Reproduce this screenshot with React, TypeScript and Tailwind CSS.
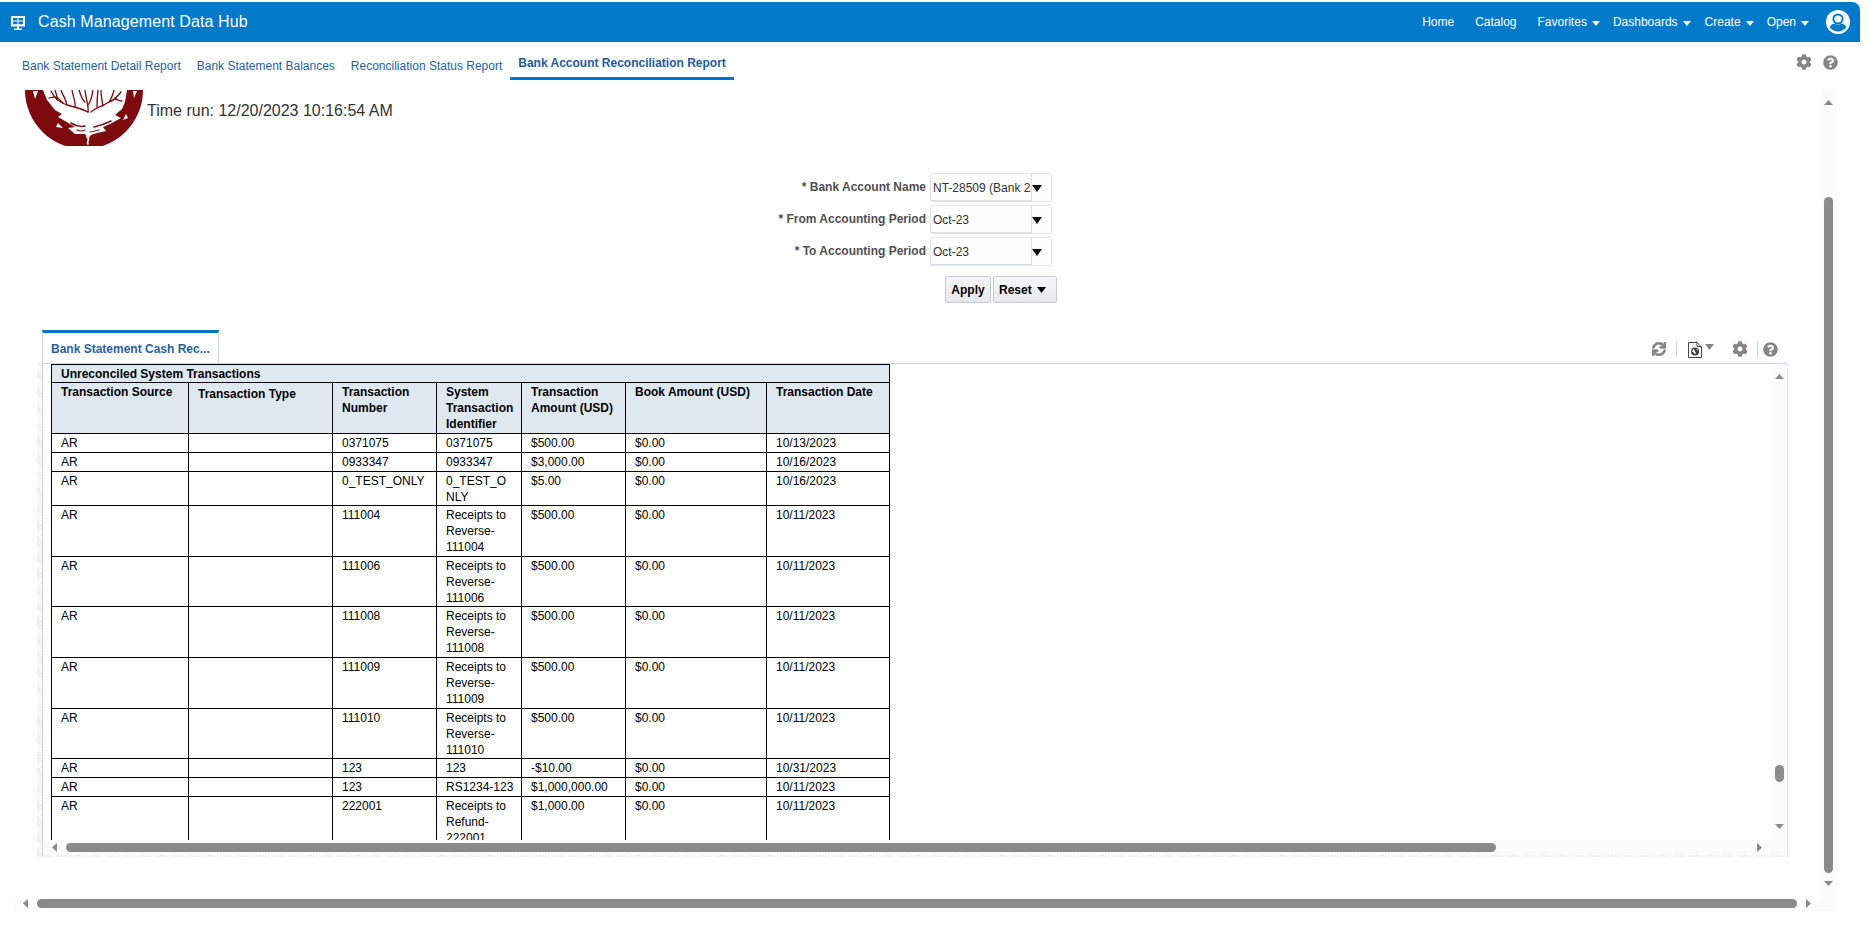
import React from 'react';
import { FaCog, FaQuestionCircle, FaSync } from 'react-icons/fa';

const tabs = ['Bank Statement Detail Report', 'Bank Statement Balances', 'Reconciliation Status Report'];

const columns = [
  { label: 'Transaction Source', width: 'w-[137px]' },
  { label: 'Transaction Type', width: 'w-[144px]' },
  { label: 'Transaction Number', width: 'w-[104px]' },
  { label: 'System Transaction Identifier', width: 'w-[85px]' },
  { label: 'Transaction Amount (USD)', width: 'w-[104px]' },
  { label: 'Book Amount (USD)', width: 'w-[141px]' },
  { label: 'Transaction Date', width: 'w-[123px]' },
];

const rows = [
  { h: 'h-[19px]', cells: ['AR', '', '0371075', '0371075', '$500.00', '$0.00', '10/13/2023'] },
  { h: 'h-[19px]', cells: ['AR', '', '0933347', '0933347', '$3,000.00', '$0.00', '10/16/2023'] },
  { h: 'h-[34px]', cells: ['AR', '', '0_TEST_ONLY', '0_TEST_ONLY', '$5.00', '$0.00', '10/16/2023'] },
  { h: 'h-[51px]', cells: ['AR', '', '111004', 'Receipts to Reverse-111004', '$500.00', '$0.00', '10/11/2023'] },
  { h: 'h-[50px]', cells: ['AR', '', '111006', 'Receipts to Reverse-111006', '$500.00', '$0.00', '10/11/2023'] },
  { h: 'h-[51px]', cells: ['AR', '', '111008', 'Receipts to Reverse-111008', '$500.00', '$0.00', '10/11/2023'] },
  { h: 'h-[51px]', cells: ['AR', '', '111009', 'Receipts to Reverse-111009', '$500.00', '$0.00', '10/11/2023'] },
  { h: 'h-[50px]', cells: ['AR', '', '111010', 'Receipts to Reverse-111010', '$500.00', '$0.00', '10/11/2023'] },
  { h: 'h-[19px]', cells: ['AR', '', '123', '123', '-$10.00', '$0.00', '10/31/2023'] },
  { h: 'h-[19px]', cells: ['AR', '', '123', 'RS1234-123', '$1,000,000.00', '$0.00', '10/11/2023'] },
  { h: 'h-[51px]', cells: ['AR', '', '222001', 'Receipts to Refund-222001', '$1,000.00', '$0.00', '10/11/2023'] },
];

const filters = [
  { label: '* Bank Account Name', value: 'NT-28509 (Bank 2' },
  { label: '* From Accounting Period', value: 'Oct-23' },
  { label: '* To Accounting Period', value: 'Oct-23' },
];

const navLinks = [
  { label: 'Home', ml: 'ml-0', menu: false },
  { label: 'Catalog', ml: 'ml-[21px]', menu: false },
  { label: 'Favorites', ml: 'ml-[21px]', menu: true },
  { label: 'Dashboards', ml: 'ml-[13px]', menu: true },
  { label: 'Create', ml: 'ml-[14px]', menu: true },
  { label: 'Open', ml: 'ml-[13px]', menu: true },
];

const Tri = ({ dir, className }: { dir: 'up' | 'down' | 'left' | 'right'; className: string }) => {
  const points = {
    up: '0,6 5,0 10,6',
    down: '0,0 10,0 5,6',
    left: '6,0 6,10 0,5',
    right: '0,0 6,5 0,10',
  }[dir];
  const box = dir === 'up' || dir === 'down' ? '0 0 10 6' : '0 0 6 10';
  return (
    <svg viewBox={box} className={className} fill="currentColor" preserveAspectRatio="none">
      <polygon points={points} />
    </svg>
  );
};

const MonitorIcon = () => (
  <svg viewBox="0 0 16 16" className="w-[16px] h-[16px] text-white" fill="currentColor">
    <path d="M1 1h14v10.5H1z" />
    <path fill="#027ac9" d="M3 3h4.5v2.6H3zM8.5 3H13v2.6H8.5zM3 6.6h4.5v2.6H3zM8.5 6.6H13v2.6H8.5z" />
    <path d="M7 11.5h2v2H7zM4 13.5h8V15H4z" />
  </svg>
);

const AvatarIcon = () => (
  <svg viewBox="0 0 24 24" className="w-[24px] h-[24px]">
    <circle cx="12" cy="12" r="12" fill="#fff" />
    <circle cx="12" cy="9" r="4.6" fill="none" stroke="#027ac9" strokeWidth="2" />
    <path d="M3.6 17c2-3.4 4.2-3.6 5.4-3 1.8 1 4.2 1 6 0 1.2-.6 3.400-.4 5.400 3-1.800 2.800-5 4.600-8.400 4.600S5.400 19.800 3.600 17z" fill="#027ac9" />
  </svg>
);

const ExportIcon = () => (
  <svg viewBox="0 0 14 17" className="w-[14px] h-[17px]">
    <path d="M.5 1.500h8.500l4.500 4.500v10.500H.5z" fill="#fff" stroke="#444" strokeWidth="1" />
    <path d="M9 .5v5h4.500" fill="none" stroke="#444" strokeWidth="1" />
    <circle cx="7" cy="10.500" r="4" fill="#3c3c3c" />
    <path d="M5 8.500c1.500-.5 2 .5 1.500 1.500l1.500 1.500-1 2-1-1.500L4 10.500zM8.500 7.800l1.500 1-1 1z" fill="#fff" />
  </svg>
);

const Logo = () => (
  <svg viewBox="0 0 118 56" className="w-[118px] h-[56px]">
    <path d="M0 0A59 59 0 0 0 118 0Z" fill="#7c0a0e" />
    <path d="M18 0H102L100 12 97 19 90 25 96 28 85 34 78 37 81 41 72 43 66 45 63 49 60 44 50 44 43 38 50 37 40 31 33 27 37 24 30 20 22 10Z" fill="#fff" />
    <g fill="none" stroke="#7c0a0e" strokeWidth="1.300" strokeLinecap="round">
      <path d="M63 22C58 19 50 17 42 15 36 13 30 10 26 1" />
      <path d="M42 15C41 9 38 6 36 0M50 17C51 12 48 7 47 0M32 10C33 7 31 4 30 0M38 13C34 10 34 5 24 8" />
      <path d="M63 22C64 16 61 10 60 0M60 12C57 10 56 6 54 0M63 15C66 12 67 6 68 0" />
      <path d="M66 22C70 18 78 16 84 12 87 8 88 4 89 0M78 16C77 11 76 6 76 0M84 12C88 11 92 7 96 2M72 18C72 14 72 8 73 0M90 8C92 10 94 11 97 11" />
    </g>
    <g fill="none" stroke="#7c0a0e" strokeLinecap="round">
      <path d="M46 33C52 37 56 37 60 36" strokeWidth="1.600" />
      <path d="M52 40C56 42 58 41 60 40" strokeWidth="1.200" />
      <path d="M86 31C78 35 74 36 69 37" strokeWidth="1.600" />
      <path d="M74 40C70 41 67 42 65 42" strokeWidth="1" />
    </g>
    <path d="M62 47C66 50 61 51 63 54" fill="none" stroke="#fff" strokeWidth="1.600" strokeLinecap="round" />
    <path d="M8 1l5 0-3 8zM108 1l4 0-3 7zM33 33l5 5-7-1zM101 24l-3 6 5-2z" fill="#fff" />
  </svg>
);

const FilterRow = ({ label, value }: { label: string; value: string }) => (
  <div className="flex items-center justify-end h-[29px] w-[1052px]">
    <span className="mr-[4px] mb-[2px] text-[12px] font-bold text-[#505050] whitespace-nowrap">{label}</span>
    <div className="flex w-[122px] h-[29px] border border-[#e2e6ea] rounded-[2px] bg-[#fdfdfe]">
      <div className="w-[101px] h-[27px] border-r border-b border-[#d9dfe5] pl-[2px] text-[12px] leading-[28px] text-[#333] overflow-hidden whitespace-nowrap">
        {value}
      </div>
      <Tri dir="down" className="w-[10px] h-[7px] mt-[11px]" />
    </div>
  </div>
);

const hatch = 'bg-[repeating-linear-gradient(45deg,#ececec_0,#ececec_1px,#fff_1px,#fff_2px)]';

export default function App() {
  return (
    <div className="w-[1868px] h-[926px] bg-white overflow-hidden font-['Liberation_Sans',Arial,sans-serif]">
      <header className="mt-[2px] w-[1860px] h-[40px] bg-[#027ac9] rounded-tr-[8px] flex items-center text-white">
        <div className="ml-[10px] mt-[2px]">
          <MonitorIcon />
        </div>
        <span className="ml-[12px] text-[16px] tracking-[0.1px] whitespace-nowrap">Cash Management Data Hub</span>
        <nav className="ml-auto flex items-center text-[12px] whitespace-nowrap">
          {navLinks.map((link) => (
            <div key={link.label} className={`flex items-center ${link.ml}`}>
              <span>{link.label}</span>
              {link.menu && <Tri dir="down" className="w-[8px] h-[5px] ml-[5px] mt-[2px] text-white" />}
            </div>
          ))}
        </nav>
        <div className="ml-[17px] mr-[10px]">
          <AvatarIcon />
        </div>
      </header>

      <div className="flex h-[48px] pl-[22px] text-[12px] text-[#2a5f9e] whitespace-nowrap">
        {tabs.map((t) => (
          <span key={t} className="mt-[16px] mr-[16px] leading-[16px] h-[16px]">{t}</span>
        ))}
        <div className="-ml-[8px] mt-[13px] h-[25px] px-[8px] border-b-[3px] border-[#0572ce] font-bold leading-[16px] text-[#245a9c]">
          Bank Account Reconciliation Report
        </div>
        <div className="ml-auto mr-[30px] mt-[12px] h-[16px] flex items-center text-[#858585]">
          <FaCog className="w-[16px] h-[16px]" />
          <FaQuestionCircle className="ml-[11px] w-[15px] h-[15px]" />
        </div>
      </div>

      <div className="flex h-[809px]">
        <main className="w-[1821px] h-[809px] overflow-hidden">
          <div className="flex h-[56px] pl-[25px]">
            <Logo />
            <span className="ml-[4px] mt-[12px] text-[16px] leading-[18px] text-[#333] whitespace-nowrap">
              Time run: 12/20/2023 10:16:54 AM
            </span>
          </div>

          <div className="mt-[27px] flex flex-col gap-[3px]">
            {filters.map((f) => (
              <FilterRow key={f.label} label={f.label} value={f.value} />
            ))}
          </div>
          <div className="mt-[10px] ml-[945px] flex gap-[2px] text-[12px] font-bold text-black">
            <button className="w-[46px] h-[27px] border border-[#c4ccd4] rounded-[2px] bg-gradient-to-b from-[#f5f6f7] to-[#e5e8eb]">
              Apply
            </button>
            <button className="w-[64px] h-[27px] pl-[5px] border border-[#c4ccd4] rounded-[2px] bg-gradient-to-b from-[#f5f6f7] to-[#e5e8eb] flex items-center">
              Reset
              <Tri dir="down" className="w-[9px] h-[6px] ml-[5px] text-black" />
            </button>
          </div>

          <div className="mt-[27px] ml-[42px] w-[1746px] flex items-center h-[34px]">
            <div className="w-[177px] h-[34px] border-t-[3px] border-x border-t-[#0572ce] border-x-[#c4d3e2] bg-white pl-[8px] text-[12px] font-bold leading-[32px] text-[#2a5f9e] whitespace-nowrap">
              Bank Statement Cash Rec...
            </div>
            <div className="ml-auto mr-[10px] mt-[4px] flex items-center text-[#858585]">
              <FaSync className="w-[14px] h-[14px]" stroke="currentColor" strokeWidth={30} />
              <div className="ml-[10px] w-px h-[16px] bg-[#c9d7e4]" />
              <div className="ml-[11px]">
                <ExportIcon />
              </div>
              <Tri dir="down" className="w-[9px] h-[6px] ml-[3px] mb-[4px] text-[#858585]" />
              <FaCog className="ml-[18px] w-[16px] h-[16px]" />
              <div className="ml-[9px] w-px h-[16px] bg-[#c9d7e4]" />
              <FaQuestionCircle className="ml-[5px] w-[15px] h-[15px]" />
            </div>
          </div>

          <div className="flex -mt-px ml-[37px] w-[1751px] h-[494px]">
            <div className={`w-[5px] h-full ${hatch}`} />
            <div className="w-[1745px] h-full border-l border-t border-[#c9d7e4] flex flex-col">
              <div className="flex h-[476px] shrink-0">
                <div className="w-[1728px] pl-[8px] overflow-hidden">
                  <table className="table-fixed border-collapse w-[838px] text-[12px] leading-[16px] text-black">
                    <colgroup>
                      {columns.map((c) => (
                        <col key={c.label} className={c.width} />
                      ))}
                    </colgroup>
                    <thead className="bg-[#dfe8f1] font-bold">
                      <tr className="h-[18px]">
                        <th colSpan={7} className="border border-black pl-[9px] pt-px text-left align-top font-bold">
                          Unreconciled System Transactions
                        </th>
                      </tr>
                      <tr className="h-[51px]">
                        {columns.map((c, i) => (
                          <th
                            key={c.label}
                            className={`border border-black pl-[9px] pr-[4px] text-left align-top font-bold ${i === 1 ? 'pt-[3px]' : 'pt-px'}`}
                          >
                            {c.label}
                          </th>
                        ))}
                      </tr>
                    </thead>
                    <tbody>
                      {rows.map((row, r) => (
                        <tr key={r} className={row.h}>
                          {row.cells.map((cell, c) => (
                            <td key={c} className="border border-black pl-[9px] pr-[7px] pt-px align-top break-words">
                              {cell}
                            </td>
                          ))}
                        </tr>
                      ))}
                    </tbody>
                  </table>
                </div>
                <div className="w-[16px] bg-[#fbfbfb] flex flex-col items-center text-[#8a8a8a]">
                  <Tri dir="up" className="w-[9px] h-[5px] mt-[10px]" />
                  <div className="w-[9px] h-[17px] mt-[386px] rounded-full bg-[#8a8a8a]" />
                  <Tri dir="down" className="w-[9px] h-[5px] mt-[42px]" />
                </div>
              </div>
              <div className="flex items-center h-[15px] bg-[#fbfbfb] text-[#8a8a8a]">
                <Tri dir="left" className="w-[5px] h-[9px] ml-[9px]" />
                <div className="ml-[9px] w-[1430px] h-[9px] rounded-full bg-[#8a8a8a]" />
                <Tri dir="right" className="w-[5px] h-[9px] ml-[261px]" />
              </div>
              <div className={`flex-1 ${hatch}`} />
            </div>
            <div className="w-px h-full bg-[repeating-linear-gradient(0deg,#d5dde6_0,#d5dde6_1px,#fff_1px,#fff_2px)]" />
          </div>
        </main>
        <aside className="w-[15px] h-[809px] bg-[#fbfbfb] flex flex-col items-center text-[#8a8a8a]">
          <Tri dir="up" className="w-[9px] h-[5px] mt-[10px]" />
          <div className="w-[9px] h-[676px] mt-[92px] rounded-full bg-[#8a8a8a]" />
          <Tri dir="down" className="w-[9px] h-[5px] mt-[8px]" />
        </aside>
      </div>

      <div className="flex items-start ml-[14px] w-[1822px] h-[12px] bg-[#fbfbfb] text-[#8a8a8a]">
        <Tri dir="left" className="w-[5px] h-[9px] ml-[9px]" />
        <div className="ml-[9px] w-[1760px] h-[9px] rounded-full bg-[#8a8a8a]" />
        <Tri dir="right" className="w-[5px] h-[9px] ml-[9px]" />
      </div>
    </div>
  );
}
